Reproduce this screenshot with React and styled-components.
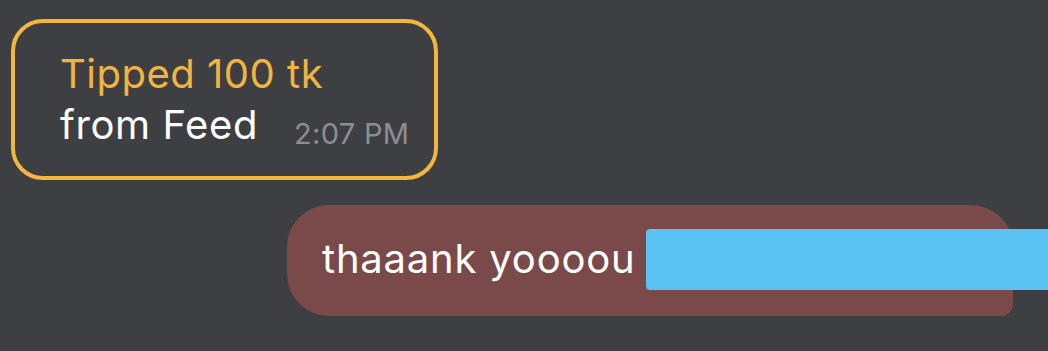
import styled, { createGlobalStyle } from "styled-components";

const GlobalStyle = createGlobalStyle`
  html, body {
    margin: 0;
    padding: 0;
    background: #3e3f43;
  }
  body {
    font-family: Inter, "Noto Sans", "Liberation Sans", sans-serif;
    -webkit-font-smoothing: antialiased;
  }
`;

const Chat = styled.div`
  width: 1048px;
  height: 351px;
  box-sizing: border-box;
  padding: 19px 35px 0 11px;
  display: flex;
  flex-direction: column;
  gap: 25px;
  overflow: hidden;
`;

const TipBubble = styled.div`
  align-self: flex-start;
  box-sizing: border-box;
  width: 427px;
  height: 161px;
  border: 4px solid #f2b73c;
  border-radius: 32px;
  padding: 25px 20px 0 45px;
`;

const TipTitle = styled.div`
  color: #f1b53f;
  font-size: 40px;
  line-height: 51px;
  letter-spacing: 0.5px;
`;

const TipRow = styled.div`
  display: flex;
  align-items: flex-end;
  gap: 36px;
`;

const TipText = styled.span`
  color: #ffffff;
  font-size: 40px;
  line-height: 51px;
  letter-spacing: 0.6px;
`;

const Time = styled.span`
  color: #8d8e92;
  font-size: 29px;
  line-height: 32px;
  letter-spacing: 0.3px;
`;

const OutBubble = styled.div`
  position: relative;
  align-self: flex-end;
  box-sizing: border-box;
  width: 726px;
  height: 111px;
  background: #7a4a4a;
  border-radius: 42px 42px 12px 42px;
  padding: 0 35px;
  display: flex;
  align-items: center;
`;

const OutText = styled.span`
  color: #ffffff;
  font-size: 40px;
  line-height: 50px;
  letter-spacing: 0.8px;
  margin-top: -4px;
`;

const Redaction = styled.div`
  position: absolute;
  left: 359px;
  top: 24px;
  width: 420px;
  height: 61px;
  background: #5bc3f4;
  border-radius: 4px;
`;

export default function App() {
  return (
    <>
      <GlobalStyle />
      <Chat>
        <TipBubble>
          <TipTitle>Tipped 100 tk</TipTitle>
          <TipRow>
            <TipText>from Feed</TipText>
            <Time>2:07 PM</Time>
          </TipRow>
        </TipBubble>
        <OutBubble>
          <OutText>thaaank yoooou</OutText>
          <Redaction />
        </OutBubble>
      </Chat>
    </>
  );
}
